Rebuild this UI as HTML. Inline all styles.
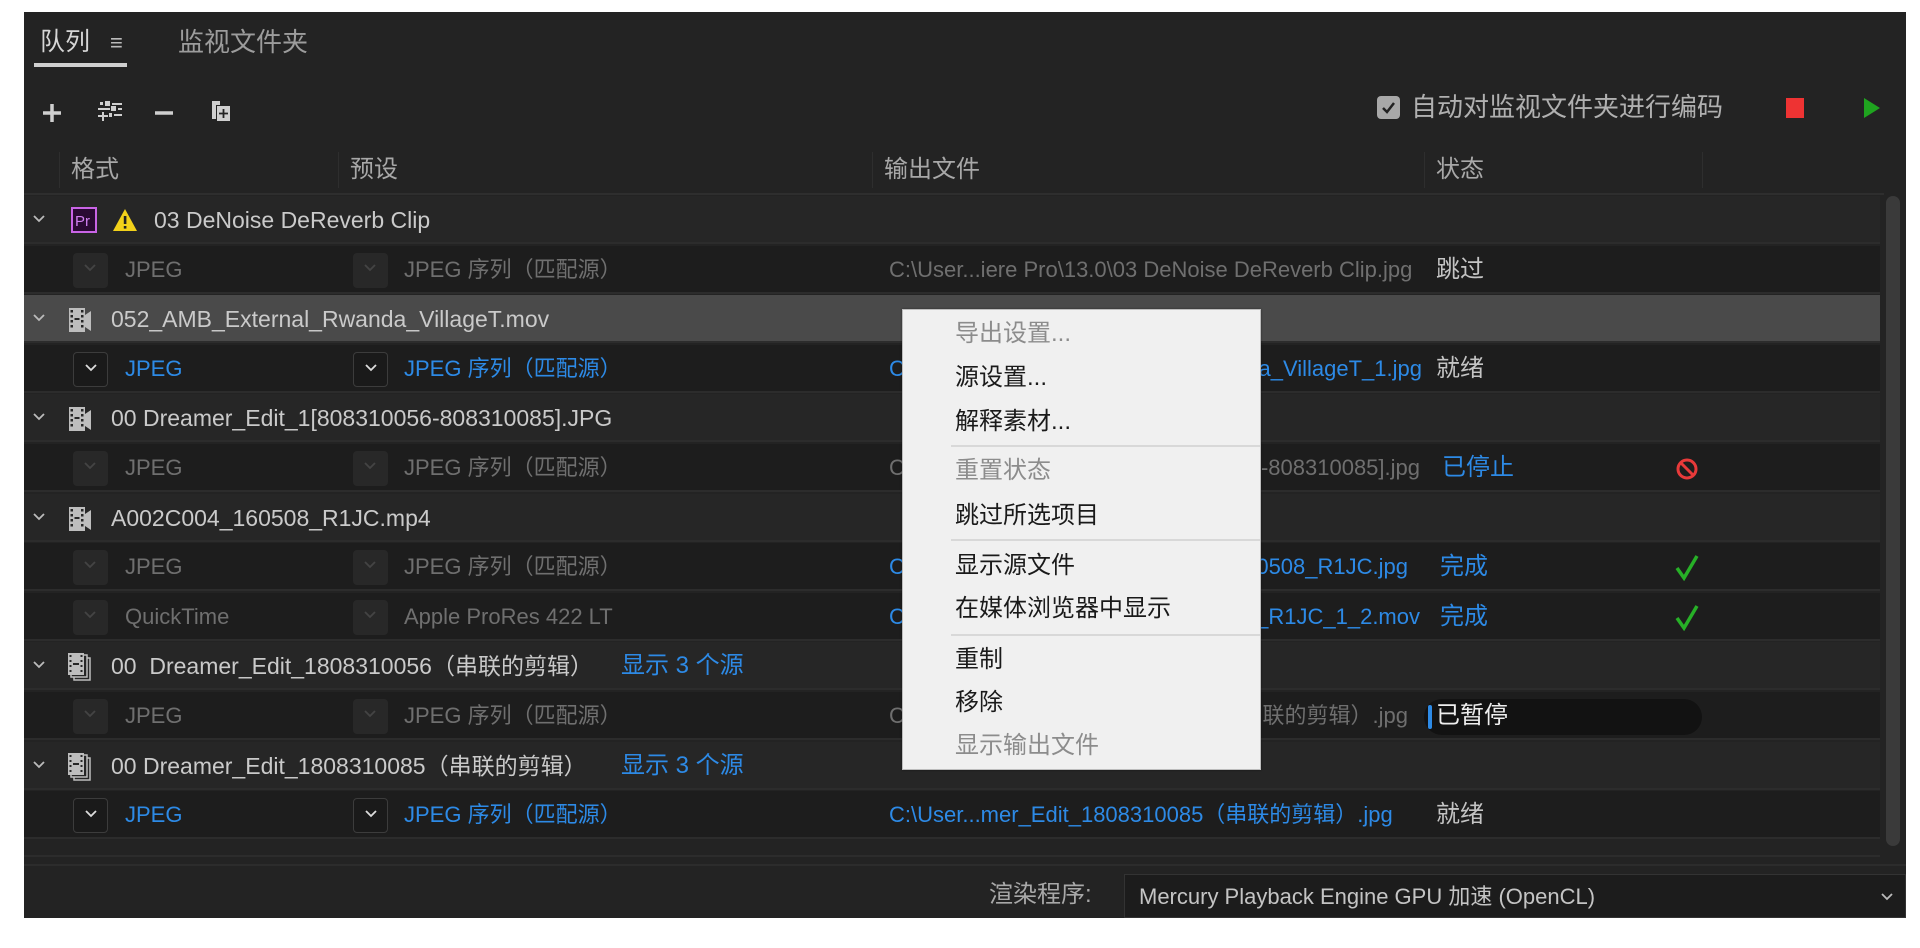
<!DOCTYPE html>
<html><head><meta charset="utf-8"><style>
*{margin:0;padding:0;box-sizing:border-box}
body{width:1920px;height:948px;background:#fff;position:relative;overflow:hidden;font-family:"Liberation Sans","Noto Sans CJK SC",sans-serif;}
#p{position:absolute;left:24px;top:12px;width:1882px;height:906px;background:#232323;overflow:hidden}
.a{position:absolute;white-space:nowrap}
.row{position:absolute;left:0;width:1856px;height:48px;border-bottom:2px solid #2c2c2c}
.g{background:#262626}
.i{background:#1d1d1d}
.sel{background:#4a4a4a}
.t{position:absolute;top:0;line-height:48px;font-size:22px;white-space:nowrap}
.gt{color:#cacaca}
.g .gt{font-size:23px}
.dim{color:#6f6f6f}
.blue{color:#2d8ae6}
.st{color:#c4c4c4;font-size:24px}
.box{position:absolute;top:7px;width:35px;height:35px;border-radius:4px}
.box.d{background:#282828}
.box.e{border:1.5px solid #3c3c3c;background:#1a1a1a}
.chev{position:absolute;left:10px;top:10px}
.menu{position:absolute;left:878px;top:297px;width:359px;height:461px;background:#f0f0f0;border:1px solid #bdbdbd;box-shadow:0 0 2px rgba(0,0,0,.4)}
.mi{position:absolute;left:52px;font-size:24px;line-height:30px;color:#1a1a1a;white-space:nowrap}
.mi.x{color:#8c8c8c}
.sep{position:absolute;left:48px;right:0;height:2px;background:#d8d8d8}
</style></head><body>
<div id="p">
 <div class="a" style="left:16px;top:14px;font-size:25px;color:#d6d6d6;line-height:32px">队列</div>
 <div class="a" style="left:86px;top:16px;font-size:22px;color:#bbb;line-height:30px">≡</div>
 <div class="a" style="left:10px;top:51px;width:93px;height:4px;background:#cfcfcf"></div>
 <div class="a" style="left:154px;top:14px;font-size:26px;color:#9c9c9c;line-height:32px">监视文件夹</div>
 <svg class="a" style="left:16px;top:86px" width="210" height="30" viewBox="0 0 210 30">
  <path d="M3 15h18M12 6v18" stroke="#cfcfcf" stroke-width="3.5"/>
  <g fill="#cfcfcf"><rect x="60" y="4" width="3" height="3"/><rect x="65" y="3" width="5" height="5"/><rect x="72" y="5" width="10" height="2"/><rect x="58" y="10" width="12" height="2"/><rect x="71" y="8" width="5" height="5"/><rect x="78" y="10" width="4" height="2"/><rect x="62" y="14" width="2" height="9"/><rect x="58" y="17" width="10" height="2"/><rect x="69" y="15" width="3" height="4"/><rect x="74" y="16" width="8" height="2"/></g>
  <path d="M115 15h18" stroke="#cfcfcf" stroke-width="3.5"/>
  <path d="M172 3h8v4h-4v14h-4z" fill="#cfcfcf"/><rect x="177" y="8" width="13" height="15" fill="#cfcfcf"/><path d="M183.5 11v9M179 15.5h9" stroke="#232323" stroke-width="1.8"/>
 </svg>
 <div class="a" style="left:1353px;top:84px;width:23px;height:23px;border-radius:4px;background:#a8a8a8"></div>
 <svg class="a" style="left:1353px;top:84px" width="23" height="23"><path d="M6 12l4 4 7-9" stroke="#222" stroke-width="2.5" fill="none"/></svg>
 <div class="a" style="left:1387px;top:79px;font-size:26px;color:#b0b0b0;line-height:32px">自动对监视文件夹进行编码</div>
 <div class="a" style="left:1762px;top:86px;width:18px;height:20px;background:#ee3333"></div>
 <svg class="a" style="left:1838px;top:84px" width="20" height="24"><path d="M2 2l16 10-16 10z" fill="#1fa41f"/></svg>
 <div class="a" style="left:35px;top:140px;width:1px;height:36px;background:#2e2e2e"></div>
 <div class="a" style="left:314px;top:140px;width:1px;height:36px;background:#2e2e2e"></div>
 <div class="a" style="left:848px;top:140px;width:1px;height:36px;background:#2e2e2e"></div>
 <div class="a" style="left:1400px;top:140px;width:1px;height:36px;background:#2e2e2e"></div>
 <div class="a" style="left:1678px;top:140px;width:1px;height:36px;background:#2e2e2e"></div>
 <div class="a" style="left:47px;top:143px;font-size:24px;color:#a8a8a8;line-height:30px">格式</div>
 <div class="a" style="left:326px;top:143px;font-size:24px;color:#a8a8a8;line-height:30px">预设</div>
 <div class="a" style="left:860px;top:143px;font-size:24px;color:#a8a8a8;line-height:30px">输出文件</div>
 <div class="a" style="left:1412px;top:143px;font-size:24px;color:#a8a8a8;line-height:30px">状态</div>
 <div class="a" style="left:0;top:181px;width:1860px;height:2px;background:#2e2e2e"></div>
 <div class="a" style="left:1862px;top:184px;width:14px;height:650px;border-radius:7px;background:#3a3a3a"></div>

 <div id="rows"></div>

 <div class="a" style="left:0;top:852px;width:1882px;height:2px;background:#2c2c2c"></div>
 <div class="a" style="left:965px;top:868px;font-size:24px;color:#a8a8a8;line-height:30px">渲染程序:</div>
 <div class="a" style="left:1100px;top:862px;width:782px;height:44px;background:#1c1c1c;border:1px solid #333"></div>
 <div class="a" style="left:1115px;top:868px;font-size:22px;color:#c4c4c4;line-height:34px">Mercury Playback Engine GPU 加速 (OpenCL)</div>
 <svg class="a" style="left:1856px;top:880px" width="14" height="10"><path d="M2 2l5 5 5-5" stroke="#bbb" stroke-width="1.8" fill="none"/></svg>

 <div class="menu">
  <div class="mi x" style="top:9px">导出设置...</div>
  <div class="mi" style="top:53px">源设置...</div>
  <div class="mi" style="top:97px">解释素材...</div>
  <div class="sep" style="top:135px"></div>
  <div class="mi x" style="top:146px">重置状态</div>
  <div class="mi" style="top:191px">跳过所选项目</div>
  <div class="sep" style="top:229px"></div>
  <div class="mi" style="top:241px">显示源文件</div>
  <div class="mi" style="top:284px">在媒体浏览器中显示</div>
  <div class="sep" style="top:324px"></div>
  <div class="mi" style="top:335px">重制</div>
  <div class="mi" style="top:378px">移除</div>
  <div class="mi x" style="top:421px">显示输出文件</div>
 </div>
</div>
<script>
var chevG='<svg class="a" style="left:8px;top:18px" width="14" height="10"><path d="M2 2l5 5 5-5" stroke="#bbb" stroke-width="1.8" fill="none"/></svg>';
function film(x){return '<svg class="a" style="left:'+x+'px;top:12px" width="26" height="26"><rect x="2" y="1" width="16" height="24" fill="#bdbdbd"/><g fill="#262626"><rect x="3.5" y="3" width="2.5" height="2.5"/><rect x="3.5" y="8" width="2.5" height="2.5"/><rect x="3.5" y="13" width="2.5" height="2.5"/><rect x="3.5" y="18" width="2.5" height="2.5"/><rect x="14" y="3" width="2.5" height="2.5"/><rect x="14" y="8" width="2.5" height="2.5"/><rect x="14" y="13" width="2.5" height="2.5"/><rect x="14" y="18" width="2.5" height="2.5"/><rect x="7.5" y="11" width="5" height="2"/></g><path d="M18 8l6-4v20l-6-4z" fill="#bdbdbd"/></svg>';}
function seq(x){return '<svg class="a" style="left:'+x+'px;top:10px" width="28" height="30"><rect x="8" y="6" width="16" height="22" fill="none" stroke="#bdbdbd" stroke-width="1.5"/><rect x="5" y="3" width="16" height="22" fill="#262626" stroke="#bdbdbd" stroke-width="1.5"/><rect x="2" y="1" width="16" height="22" fill="#bdbdbd"/><g fill="#262626"><rect x="3.5" y="3" width="2" height="2"/><rect x="3.5" y="8" width="2" height="2"/><rect x="3.5" y="13" width="2" height="2"/><rect x="3.5" y="18" width="2" height="2"/><rect x="14.5" y="3" width="2" height="2"/><rect x="14.5" y="8" width="2" height="2"/><rect x="14.5" y="13" width="2" height="2"/><rect x="14.5" y="18" width="2" height="2"/><rect x="7" y="11" width="6" height="2"/></g></svg>';}
function box(x,en){return '<div class="box '+(en?'e':'d')+'" style="left:'+x+'px"><svg class="chev" width="14" height="10"><path d="M2 2l5 5 5-5" stroke="'+(en?'#ddd':'#444')+'" stroke-width="1.8" fill="none"/></svg></div>';}
var P='JPEG 序列（匹配源）';
var rows=[
 ['g','<svg class="a" style="left:47px;top:11px" width="26" height="26"><rect x="1" y="1" width="24" height="24" fill="#2a0a33" stroke="#c964e6" stroke-width="2"/><text x="4" y="19" font-size="15" fill="#d07ff0" font-family="Liberation Sans">Pr</text></svg><svg class="a" style="left:87px;top:11px" width="28" height="26"><path d="M14 2l12 22H2z" fill="#f2d11a"/><rect x="12.8" y="9" width="2.6" height="8" fill="#222"/><rect x="12.8" y="19" width="2.6" height="2.6" fill="#222"/></svg><span class="t gt" style="left:130px">03 DeNoise DeReverb Clip</span>'],
 ['i',box(49,0)+'<span class="t dim" style="left:101px">JPEG</span>'+box(329,0)+'<span class="t dim" style="left:380px">'+P+'</span><span class="t dim" style="left:865px">C:\\User...iere Pro\\13.0\\03 DeNoise DeReverb Clip.jpg</span><span class="t st" style="left:1412px">跳过</span>'],
 ['g sel',film(43)+'<span class="t gt" style="left:87px">052_AMB_External_Rwanda_VillageT.mov</span>'],
 ['i',box(49,1)+'<span class="t blue" style="left:101px">JPEG</span>'+box(329,1)+'<span class="t blue" style="left:380px">'+P+'</span><span class="t blue" style="left:865px">C</span><span class="t blue" style="right:458px">a_VillageT_1.jpg</span><span class="t st" style="left:1412px">就绪</span>'],
 ['g',film(43)+'<span class="t gt" style="left:87px">00 Dreamer_Edit_1[808310056-808310085].JPG</span>'],
 ['i',box(49,0)+'<span class="t dim" style="left:101px">JPEG</span>'+box(329,0)+'<span class="t dim" style="left:380px">'+P+'</span><span class="t dim" style="left:865px">C</span><span class="t dim" style="right:460px">-808310085].jpg</span><span class="t blue" style="left:1418px;font-size:24px">已停止</span><svg class="a" style="left:1651px;top:13px" width="24" height="24"><circle cx="12" cy="12" r="9" fill="none" stroke="#e83a3a" stroke-width="3"/><path d="M6 6l12 12" stroke="#e83a3a" stroke-width="3"/></svg>'],
 ['g',film(43)+'<span class="t gt" style="left:87px">A002C004_160508_R1JC.mp4</span>'],
 ['i',box(49,0)+'<span class="t dim" style="left:101px">JPEG</span>'+box(329,0)+'<span class="t dim" style="left:380px">'+P+'</span><span class="t blue" style="left:865px">C</span><span class="t blue" style="right:472px">60508_R1JC.jpg</span><span class="t blue" style="left:1416px;font-size:24px">完成</span><svg class="a" style="left:1650px;top:10px" width="26" height="28"><path d="M3 15l7 10L23 3" stroke="#27b027" stroke-width="3.5" fill="none"/></svg>'],
 ['i',box(49,0)+'<span class="t dim" style="left:101px">QuickTime</span>'+box(329,0)+'<span class="t dim" style="left:380px">Apple ProRes 422 LT</span><span class="t blue" style="left:865px">C</span><span class="t blue" style="right:460px">_R1JC_1_2.mov</span><span class="t blue" style="left:1416px;font-size:24px">完成</span><svg class="a" style="left:1650px;top:10px" width="26" height="28"><path d="M3 15l7 10L23 3" stroke="#27b027" stroke-width="3.5" fill="none"/></svg>'],
 ['g',seq(42)+'<span class="t gt" style="left:87px">00&nbsp; Dreamer_Edit_1808310056（串联的剪辑）</span><span class="t blue" style="left:597px;font-size:24px">显示 3 个源</span>'],
 ['i',box(49,0)+'<span class="t dim" style="left:101px">JPEG</span>'+box(329,0)+'<span class="t dim" style="left:380px">'+P+'</span><span class="t dim" style="left:865px">C</span><span class="t dim" style="right:472px">联的剪辑）.jpg</span><div class="a" style="left:1400px;top:7px;width:278px;height:36px;border-radius:18px;background:#121212"></div><div class="a" style="left:1404px;top:13px;width:4px;height:24px;border-radius:2px;background:#2d8ae6"></div><span class="t" style="left:1412px;color:#eee;font-size:24px">已暂停</span>'],
 ['g',seq(42)+'<span class="t gt" style="left:87px">00 Dreamer_Edit_1808310085（串联的剪辑）</span><span class="t blue" style="left:597px;font-size:24px">显示 3 个源</span>'],
 ['i',box(49,1)+'<span class="t blue" style="left:101px">JPEG</span>'+box(329,1)+'<span class="t blue" style="left:380px">'+P+'</span><span class="t blue" style="left:865px">C:\\User...mer_Edit_1808310085（串联的剪辑）.jpg</span><span class="t st" style="left:1412px">就绪</span>']
];
var h='';
rows.forEach(function(r,k){var top=184+k*49.6;h+='<div class="row '+r[0]+'" style="top:'+top+'px">'+(r[0].indexOf('g')==0?chevG:'')+r[1]+'</div>';});
h+='<div class="row" style="top:'+(184+13*49.6)+'px;background:#232323;height:16px"></div>';
document.getElementById('rows').outerHTML=h;
</script>
</body></html>
